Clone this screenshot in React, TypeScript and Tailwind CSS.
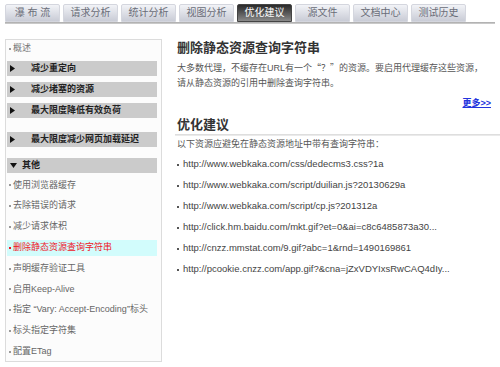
const tabs = [
  { label: "瀑 布 流", active: false },
  { label: "请求分析", active: false },
  { label: "统计分析", active: false },
  { label: "视图分析", active: false },
  { label: "优化建议", active: true },
  { label: "源文件", active: false },
  { label: "文档中心", active: false },
  { label: "测试历史", active: false },
];

const groups = [
  { label: "减少重定向", mt: "mt-[4px]" },
  { label: "减少堵塞的资源", mt: "mt-[6px]" },
  { label: "最大限度降低有效负荷", mt: "mt-[6px]" },
  { label: "最大限度减少网页加载延迟", mt: "mt-[14px]" },
];

const items = [
  "使用浏览器缓存",
  "去除错误的请求",
  "减少请求体积",
  "删除静态资源查询字符串",
  "声明缓存验证工具",
  "启用Keep-Alive",
  "指定 “Vary: Accept-Encoding”标头",
  "标头指定字符集",
  "配置ETag",
];

const links = [
  "http://www.webkaka.com/css/dedecms3.css?1a",
  "http://www.webkaka.com/script/duilian.js?20130629a",
  "http://www.webkaka.com/script/cp.js?201312a",
  "http://click.hm.baidu.com/mkt.gif?et=0&ai=c8c6485873a30...",
  "http://cnzz.mmstat.com/9.gif?abc=1&rnd=1490169861",
  "http://pcookie.cnzz.com/app.gif?&cna=jZxVDYIxsRwCAQ4dIy...",
];

const font = "font-['Liberation_Sans','Noto_Sans_CJK_SC',sans-serif]";

function RightArrow() {
  return (
    <svg width="5" height="7" viewBox="0 0 5 7" className="shrink-0">
      <path d="M0 0 L5 3.5 L0 7 Z" fill="#111" />
    </svg>
  );
}

function DownArrow() {
  return (
    <svg width="7" height="5" viewBox="0 0 7 5" className="shrink-0">
      <path d="M0 0 L7 0 L3.5 5 Z" fill="#111" />
    </svg>
  );
}

export default function App() {
  return (
    <div className={`h-[367px] w-[500px] overflow-hidden bg-white ${font}`}>
      {/* tab strip */}
      <div className="flex gap-[3px] pl-[5px] pt-[4px]">
        {tabs.map((t) => (
          <div
            key={t.label}
            className={`flex h-[18px] w-[55px] items-center justify-center rounded-t-[2px] border text-[10px] leading-none ${
              t.active
                ? "border-[#444] bg-gradient-to-b from-[#2a2a2a] to-[#8a8a8a] text-white"
                : "border-[#d4d6de] bg-gradient-to-b from-[#f2f3f7] to-[#c9ccd6] text-[#6a6d78]"
            }`}
          >
            {t.label}
          </div>
        ))}
      </div>
      <div className="mx-[5px] h-[2px] bg-gradient-to-b from-[#a8a8a8] to-[#d4d4d4]" />

      <div className="flex">
        {/* left navigation */}
        <div className="ml-[5px] mt-[15px] h-[323px] w-[157px] shrink-0 border border-[#dcdcdc] bg-[#fcfcfc] pl-[1px] pr-[4px]">
          <div className="mt-[1px] flex h-[16px] items-center gap-[2px] pl-[2px] text-[9px] text-[#777]">
            <span className="h-[2px] w-[2px] shrink-0 bg-[#999]" />
            <span>概述</span>
          </div>
          {groups.map((g) => (
            <div
              key={g.label}
              className={`${g.mt} flex h-[15px] items-center bg-[#cbcbcb] pl-[3px] text-[9px] font-bold text-[#222]`}
            >
              <RightArrow />
              <span className="ml-[16px]">{g.label}</span>
            </div>
          ))}
          <div className="mt-[11px] flex h-[15px] items-center bg-[#cbcbcb] pl-[3px] text-[9px] font-bold text-[#222]">
            <DownArrow />
            <span className="ml-[5px]">其他</span>
          </div>
          <div className="mt-[2px]">
            {items.map((it) => {
              const active = it === "删除静态资源查询字符串";
              return (
                <div key={it} className="flex h-[20.8px] items-center">
                  <div
                    className={`flex h-[16px] w-full items-center gap-[2px] pl-[2px] text-[9px] ${
                      active ? "bg-[#d2fcfc] text-[#f0141e]" : "text-[#666]"
                    }`}
                  >
                    <span className={`h-[2px] w-[2px] shrink-0 ${active ? "bg-[#f0141e]" : "bg-[#999]"}`} />
                    <span className="whitespace-nowrap">{it}</span>
                  </div>
                </div>
              );
            })}
          </div>
        </div>

        {/* content */}
        <div className="ml-[15px] flex-1">
          <div className="mt-[16px] text-[13px] font-bold leading-[16px] text-[#333]">
            删除静态资源查询字符串
          </div>
          <div className="mt-[4px] text-[9px] leading-[15px] text-[#555]">
            大多数代理，不缓存在URL有一个
            <span className="font-['Noto_Sans_CJK_SC',sans-serif]">“？”</span>
            的资源。要启用代理缓存这些资源，
            <br />
            请从静态资源的引用中删除查询字符串。
          </div>
          <div className="mt-[5px] pr-[9px] text-right text-[9px] leading-[14px]">
            <span className="font-bold text-[#2233dd] underline">更多&gt;&gt;</span>
          </div>
          <div className="mt-[7px] text-[13px] font-bold leading-[16px] text-[#333]">优化建议</div>
          <div className="-ml-[2px] mt-[1px] h-[2px] bg-gradient-to-b from-[#d8d8d8] to-[#f0f0f0]" />
          <div className="mt-[1px] text-[9px] leading-[14px] text-[#555]">
            以下资源应避免在静态资源地址中带有查询字符串：
          </div>
          <div className="mt-[3px]">
            {links.map((l) => (
              <div
                key={l}
                className="flex h-[21px] items-center gap-[4px] whitespace-nowrap text-[9.5px] text-[#444]"
              >
                <span className="h-[2px] w-[2px] shrink-0 bg-[#555]" />
                <span>{l}</span>
              </div>
            ))}
          </div>
        </div>
      </div>
    </div>
  );
}
